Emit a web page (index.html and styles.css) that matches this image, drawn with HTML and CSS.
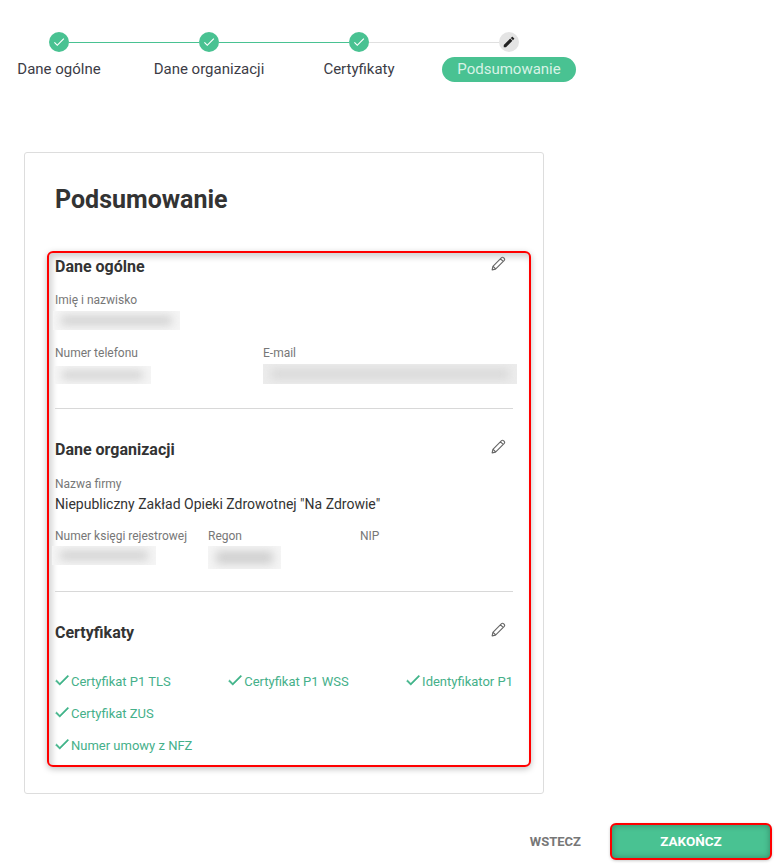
FILE: index.html
```html
<!DOCTYPE html>
<html lang="pl">
<head>
<meta charset="utf-8">
<title>Podsumowanie</title>
<link rel="stylesheet" href="styles.css">
</head>
<body>
<svg class="defs" width="0" height="0" aria-hidden="true">
  <symbol id="check" viewBox="0 0 24 24"><path d="M9 16.17L4.83 12l-1.42 1.41L9 19 21 7l-1.41-1.41z"/></symbol>
  <symbol id="edit" viewBox="0 0 24 24"><path d="M3 17.25V21h3.75L17.81 9.94l-3.75-3.75L3 17.25zM20.71 7.04c.39-.39.39-1.02 0-1.41l-2.34-2.34c-.39-.39-1.02-.39-1.41 0l-1.83 1.83 3.75 3.75 1.83-1.83z"/></symbol>
  <symbol id="pencil" viewBox="0 0 20 20"><path d="M2.5 17.5l.9-4L13.6 3.2c.7-.7 1.7-.7 2.3 0l.9.9c.6.6.6 1.6 0 2.3L6.5 16.6l-4 .9zM4 13.6l2.4 2.4M12.4 4.5l3.1 3.1" fill="none" stroke="currentColor" stroke-width="1.3" stroke-linejoin="round"/></symbol>
</svg>

<nav class="stepper">
  <div class="track">
    <span class="dot done"><svg class="dot-icon"><use href="#check"/></svg></span>
    <span class="line done"></span>
    <span class="dot done"><svg class="dot-icon"><use href="#check"/></svg></span>
    <span class="line done"></span>
    <span class="dot done"><svg class="dot-icon"><use href="#check"/></svg></span>
    <span class="line"></span>
    <span class="dot current"><svg class="dot-icon"><use href="#edit"/></svg></span>
  </div>
  <div class="labels">
    <span class="label">Dane ogólne</span>
    <span class="label">Dane organizacji</span>
    <span class="label">Certyfikaty</span>
    <span class="label active"><span class="pill">Podsumowanie</span></span>
  </div>
</nav>

<main class="card">
  <h1 class="title">Podsumowanie</h1>
  <div class="highlight">
    <section class="section first">
      <div class="section-head">
        <h2>Dane ogólne</h2>
        <svg class="pencil"><use href="#pencil"/></svg>
      </div>
      <div class="field name-field">
        <div class="key">Imię i nazwisko</div>
        <div class="redact r-name"><i></i></div>
      </div>
      <div class="row">
        <div class="field phone-field">
          <div class="key">Numer telefonu</div>
          <div class="redact r-phone"><i></i></div>
        </div>
        <div class="field">
          <div class="key">E-mail</div>
          <div class="redact r-mail"><i></i></div>
        </div>
      </div>
    </section>

    <section class="section">
      <div class="section-head">
        <h2>Dane organizacji</h2>
        <svg class="pencil"><use href="#pencil"/></svg>
      </div>
      <div class="field company-field">
        <div class="key">Nazwa firmy</div>
        <div class="value">Niepubliczny Zakład Opieki Zdrowotnej "Na Zdrowie"</div>
      </div>
      <div class="row org-row">
        <div class="field krs-field">
          <div class="key">Numer księgi rejestrowej</div>
          <div class="redact r-krs"><i></i></div>
        </div>
        <div class="field regon-field">
          <div class="key">Regon</div>
          <div class="redact r-regon"><i></i></div>
        </div>
        <div class="field">
          <div class="key">NIP</div>
        </div>
      </div>
    </section>

    <section class="section last">
      <div class="section-head">
        <h2>Certyfikaty</h2>
        <svg class="pencil"><use href="#pencil"/></svg>
      </div>
      <ul class="certs">
        <li class="cert-row">
          <span class="cert"><svg class="tick"><use href="#check"/></svg>Certyfikat P1 TLS</span>
          <span class="cert"><svg class="tick"><use href="#check"/></svg>Certyfikat P1 WSS</span>
          <span class="cert"><svg class="tick"><use href="#check"/></svg>Identyfikator P1</span>
        </li>
        <li class="cert-row"><span class="cert"><svg class="tick"><use href="#check"/></svg>Certyfikat ZUS</span></li>
        <li class="cert-row"><span class="cert"><svg class="tick"><use href="#check"/></svg>Numer umowy z NFZ</span></li>
      </ul>
    </section>
  </div>
</main>

<footer class="actions">
  <button class="btn-back" type="button">WSTECZ</button>
  <button class="btn-finish" type="button">ZAKOŃCZ</button>
</footer>
</body>
</html>
```
FILE: styles.css
```css
* { box-sizing: border-box; }
html, body { margin: 0; padding: 0; }
body {
  width: 780px;
  height: 868px;
  overflow: hidden;
  background: #fff;
  color: #333;
  font-family: Roboto, "Liberation Sans", sans-serif;
}
.defs { position: absolute; }

.stepper { padding: 32px 0 0 49px; height: 152px; }
.track { display: flex; align-items: center; height: 20px; }
.dot {
  width: 20px; height: 20px; border-radius: 50%;
  display: flex; align-items: center; justify-content: center;
  flex: none;
}
.dot.done { background: #49c292; color: #fff; }
.dot.current { background: #e4e4e4; color: #222; }
.dot-icon { width: 14px; height: 14px; fill: currentColor; }
.line { width: 130px; height: 1px; background: #e0e0e0; }
.line.done { background: #49c292; }
.labels {
  display: grid;
  grid-template-columns: repeat(4, 150px);
  margin-left: -65px;
  margin-top: 5px;
  width: 600px;
}
.label {
  height: 25px; line-height: 25px;
  font-size: 15px; color: #3c3c46;
  text-align: center;
}
.pill {
  display: inline-block;
  width: 134px; height: 25px; line-height: 25px;
  border-radius: 13px;
  background: #49c292;
  color: #d8f2e6;
  font-size: 15px;
}

.card {
  margin-left: 24px;
  width: 520px;
  height: 642px;
  border: 1px solid #ddd;
  border-radius: 3px;
  padding: 0 13px 0 22px;
}
.title {
  margin: 0;
  padding: 32px 0 0 8px;
  height: 98px;
  font-size: 25px;
  line-height: 30px;
  font-weight: 700;
  color: #333;
}
.highlight {
  width: 484px;
  height: 516px;
  border: 2px solid #f00;
  border-radius: 6px;
  padding: 0 16px 0 6px;
  box-shadow: 0 2px 6px rgba(0,0,0,.25), inset 3px 4px 6px rgba(0,0,0,.18);
}
.section { border-bottom: 1px solid #d8d8d8; height: 183px; }
.section.first { height: 156px; }
.section.last { border-bottom: 0; height: auto; }
.section-head {
  display: flex; justify-content: space-between; align-items: flex-start;
  padding: 31px 6px 0 0; height: 68px;
}
.section.first .section-head { padding-top: 4px; height: 32px; }
h2 {
  margin: 0; font-size: 16px; line-height: 20px; font-weight: 700; color: #333;
}
.pencil { width: 17px; height: 17px; color: #666; margin-top: -2px; }
.section.first .pencil { margin-top: -2px; }
.field { flex: none; }
.key { font-size: 12px; line-height: 14px; color: #777; }
.value { font-size: 14px; line-height: 20px; color: #333; margin-top: 3px; }
.row { display: flex; margin-top: 16px; }
.phone-field { width: 208px; }
.krs-field { width: 153px; }
.regon-field { width: 152px; }
.org-row { margin-top: 15px; }
.name-field { margin-top: 8px; }

.redact {
  overflow: hidden;
  background: #f5f5f5;
  margin-top: 5px;
  padding: 5px 8px;
}
.redact i {
  display: block; height: 100%;
  background: #cfcfcf;
  filter: blur(5px);
}
.r-name { width: 127px; height: 19px; margin-left: -2px; margin-top: 4px; }
.r-phone { width: 97px; height: 18px; margin-left: -1px; margin-top: 6px; }
.r-mail { width: 254px; height: 20px; background: #ececec; margin-top: 4px; }
.r-mail i { background: #d8d8d8; }
.r-krs { width: 104px; height: 19px; margin-left: -3px; margin-top: 3px; }
.r-regon { width: 73px; height: 23px; margin-top: 3px; }

.certs { list-style: none; margin: 5px 0 0; padding: 0; }
.cert-row {
  display: flex; justify-content: space-between;
  height: 32px; align-items: center;
}
.cert { display: flex; align-items: center; font-size: 13px; color: #45b08a; }
.tick {
  width: 18px; height: 18px; fill: #3fb388; stroke: #3fb388; stroke-width: .6;
  margin: -3px 0 0 -2px;
}

.actions {
  display: flex; justify-content: flex-end; align-items: center;
  margin-top: 29px; padding-right: 8px; gap: 29px;
}
.btn-back, .btn-finish {
  border: 0; background: none; font-family: inherit; font-weight: 700; font-size: 13px;
  padding: 0 0 1px;
}
.btn-back { color: #777; }
.btn-finish {
  width: 162px; height: 37px;
  background: #49c292; color: #fff;
  border: 2px solid #f00; border-radius: 6px;
  font-size: 13.5px;
  box-shadow: inset 0 0 6px rgba(0,0,0,.3), 0 1px 3px rgba(0,0,0,.2);
}
```
